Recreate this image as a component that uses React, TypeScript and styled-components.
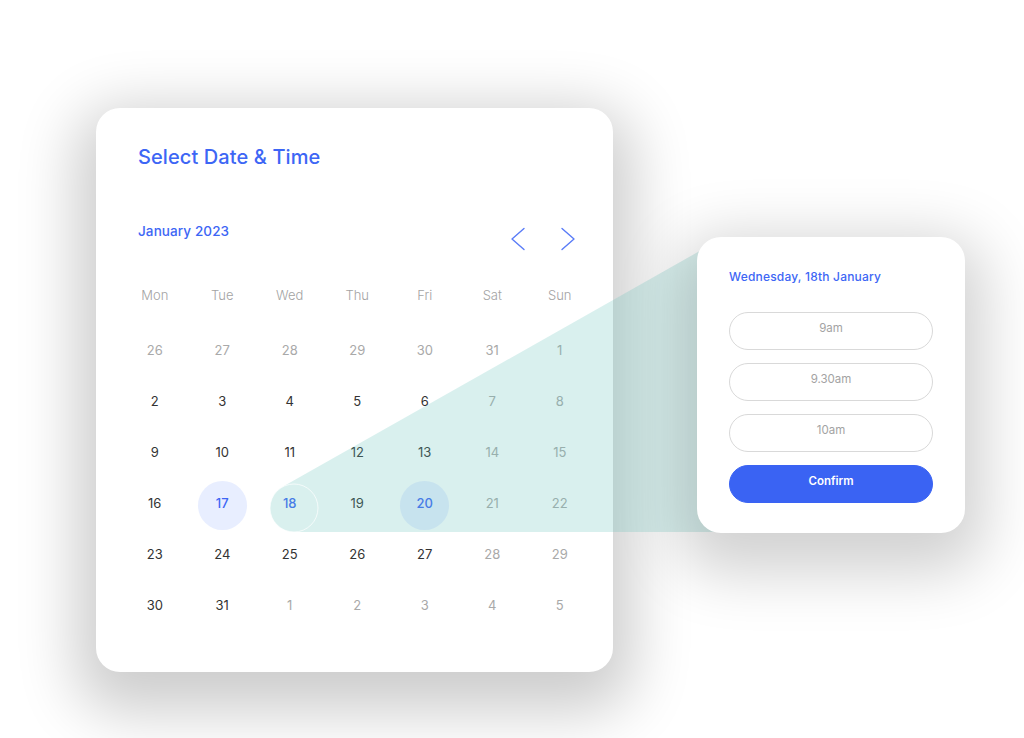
import React from "react";
import styled, { createGlobalStyle } from "styled-components";

const Global = createGlobalStyle`
  html, body { margin: 0; padding: 0; background: #ffffff; }
  body { font-family: Inter, "Noto Sans", "Liberation Sans", sans-serif; }
  * { box-sizing: border-box; }
`;

const BLUE = "#3d66f5";

const Stage = styled.div`
  position: relative;
  width: 1024px;
  height: 738px;
  overflow: hidden;
  display: flex;
  align-items: flex-start;
  gap: 84px;
  padding: 108px 0 0 96px;
`;

const Card = styled.div`
  position: relative;
  z-index: 1;
  width: 517px;
  height: 564px;
  background: #ffffff;
  border-radius: 24px;
  box-shadow: 0 20px 60px 20px rgba(0, 0, 0, 0.2);
  padding: 37px 20px 0 25px;
  display: flex;
  flex-direction: column;
`;

const Title = styled.h1`
  margin: 0 0 0 17px;
  font-size: 20px;
  line-height: 24px;
  font-weight: 500;
  color: ${BLUE};
  letter-spacing: 0.1px;
`;

const MonthRow = styled.div`
  margin-top: 54px;
  padding: 0 13px 0 17px;
  display: flex;
  align-items: flex-start;
  justify-content: space-between;
`;

const MonthLabel = styled.div`
  font-size: 13.5px;
  line-height: 16px;
  font-weight: 500;
  color: ${BLUE};
  letter-spacing: 0.1px;
`;

const NavGroup = styled.div`
  margin-top: 4px;
  display: flex;
  gap: 26px;
`;

const NavButton = styled.button`
  width: 24px;
  height: 24px;
  padding: 0;
  border: none;
  background: none;
  display: flex;
  align-items: center;
  justify-content: center;
  cursor: pointer;
`;

const WeekRow = styled.div`
  margin-top: 34px;
  display: grid;
  grid-template-columns: repeat(7, 67.5px);
  height: 20px;
`;

const WeekDay = styled.div`
  display: flex;
  align-items: center;
  justify-content: center;
  font-size: 13px;
  font-weight: 300;
  color: #a3a3a3;
`;

const DateGrid = styled.div`
  margin-top: 22px;
  display: grid;
  grid-template-columns: repeat(7, 67.5px);
  grid-auto-rows: 51px;
`;

const DateCell = styled.div`
  display: flex;
  align-items: center;
  justify-content: center;
`;

type Tone = "dark" | "muted" | "picked" | "ring";

const Day = styled.span<{ $tone: Tone }>`
  width: 49px;
  height: 49px;
  border-radius: 50%;
  display: flex;
  align-items: center;
  justify-content: center;
  padding-bottom: 6px;
  font-size: 13px;
  font-weight: ${(p) => (p.$tone === "picked" || p.$tone === "ring" ? 500 : 400)};
  color: ${(p) =>
    p.$tone === "dark" ? "#333333" : p.$tone === "muted" ? "#a9a9a9" : BLUE};
  background: ${(p) => (p.$tone === "picked" ? "#e8eeff" : "transparent")};
`;

const Overlay = styled.svg`
  position: absolute;
  left: 0;
  top: 0;
  z-index: 2;
  pointer-events: none;
`;

const Popup = styled.div`
  position: relative;
  z-index: 3;
  margin-top: 129px;
  width: 268px;
  height: 296px;
  background: #ffffff;
  border-radius: 24px;
  box-shadow: 0 20px 60px 20px rgba(0, 0, 0, 0.18);
  padding: 33px 32px 0 32px;
  display: flex;
  flex-direction: column;
`;

const PopupTitle = styled.div`
  font-size: 12px;
  line-height: 14px;
  font-weight: 500;
  color: ${BLUE};
  letter-spacing: 0.2px;
`;

const SlotList = styled.div`
  margin-top: 28px;
  display: flex;
  flex-direction: column;
  gap: 13px;
`;

const Slot = styled.button<{ $primary?: boolean }>`
  height: 38px;
  width: 100%;
  border-radius: 19px;
  border: 1px solid ${(p) => (p.$primary ? "#3a63f3" : "#d9d9d9")};
  background: ${(p) => (p.$primary ? "#3a63f3" : "#ffffff")};
  color: ${(p) => (p.$primary ? "#ffffff" : "#a3a3a3")};
  font-family: Inter, "Noto Sans", sans-serif;
  font-size: 11.5px;
  font-weight: ${(p) => (p.$primary ? 600 : 400)};
  padding: 0 0 6px;
  cursor: pointer;
`;

const Chevron = ({ dir }: { dir: "left" | "right" }) => (
  <svg width="24" height="24" viewBox="0 0 24 24" fill="none">
    <path
      d={dir === "left" ? "M18 1.5 L6 12 L18 22.5" : "M6 1.5 L18 12 L6 22.5"}
      stroke="#5a7cf7"
      strokeWidth="1.4"
      strokeLinecap="round"
      strokeLinejoin="round"
    />
  </svg>
);

const weekDays = ["Mon", "Tue", "Wed", "Thu", "Fri", "Sat", "Sun"];

const d = "dark" as Tone;
const m = "muted" as Tone;
const rows: [number, Tone][][] = [
  [[26, m], [27, m], [28, m], [29, m], [30, m], [31, m], [1, m]],
  [[2, d], [3, d], [4, d], [5, d], [6, d], [7, m], [8, m]],
  [[9, d], [10, d], [11, d], [12, d], [13, d], [14, m], [15, m]],
  [[16, d], [17, "picked"], [18, "ring"], [19, d], [20, "picked"], [21, m], [22, m]],
  [[23, d], [24, d], [25, d], [26, d], [27, d], [28, m], [29, m]],
  [[30, d], [31, d], [1, m], [2, m], [3, m], [4, m], [5, m]],
];

const slots = ["9am", "9.30am", "10am"];

export default function App() {
  return (
    <>
      <Global />
      <Stage>
        <Card>
          <Title>Select Date &amp; Time</Title>
          <MonthRow>
            <MonthLabel>January 2023</MonthLabel>
            <NavGroup>
              <NavButton aria-label="Previous month">
                <Chevron dir="left" />
              </NavButton>
              <NavButton aria-label="Next month">
                <Chevron dir="right" />
              </NavButton>
            </NavGroup>
          </MonthRow>
          <WeekRow>
            {weekDays.map((w) => (
              <WeekDay key={w}>{w}</WeekDay>
            ))}
          </WeekRow>
          <DateGrid>
            {rows.flatMap((row, ri) =>
              row.map(([n, tone], ci) => (
                <DateCell key={`${ri}-${ci}`}>
                  <Day $tone={tone}>{n}</Day>
                </DateCell>
              ))
            )}
          </DateGrid>
        </Card>
        <Overlay width="1024" height="738" viewBox="0 0 1024 738">
          <path
            d="M 282.2 487.1 L 720 239.5 L 720 532 L 294 532 A 24 24 0 0 1 282.2 487.1 Z"
            fill="rgba(100, 195, 185, 0.245)"
          />
          <circle cx="294" cy="508" r="24" fill="none" stroke="rgba(255,255,255,0.7)" strokeWidth="1" />
        </Overlay>
        <Popup>
          <PopupTitle>Wednesday, 18th January</PopupTitle>
          <SlotList>
            {slots.map((s) => (
              <Slot key={s}>{s}</Slot>
            ))}
            <Slot $primary>Confirm</Slot>
          </SlotList>
        </Popup>
      </Stage>
    </>
  );
}
